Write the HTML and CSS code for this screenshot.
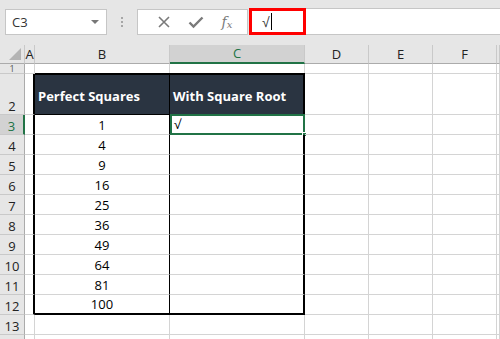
FILE: index.html
```html
<!DOCTYPE html>
<html>
<head>
<meta charset="utf-8">
<link rel="stylesheet" href="styles.css">
</head>
<body>
<div class="toolbar">
  <div class="namebox"><span>C3</span><span class="caret"></span></div>
  <div class="grip"><i></i><i></i><i></i></div>
  <div class="fbtns">
    <svg width="14" height="14" viewBox="0 0 14 14"><path d="M2 2 L12 12 M12 2 L2 12" stroke="#7a7a7a" stroke-width="1.6" fill="none"/></svg>
    <svg width="16" height="14" viewBox="0 0 16 14"><path d="M1.5 7.5 L5.5 11.5 L14.5 2.5" stroke="#7a7a7a" stroke-width="2.4" fill="none"/></svg>
    <span class="fx">f<sub>x</sub></span>
  </div>
  <div class="finput"><div class="fcell"><span class="sq">√</span><span class="cursor"></span></div></div>
</div>
<div class="sheet">
  <div class="corner"><span class="tri"></span></div>
  <div class="ch">A</div><div class="ch">B</div><div class="ch sel">C</div><div class="ch">D</div><div class="ch">E</div><div class="ch">F</div><div class="ch"></div>

  <div class="rh r1">1</div><div class="c"></div><div class="c"></div><div class="c"></div><div class="c"></div><div class="c"></div><div class="c"></div><div class="c"></div>

  <div class="rh">2</div><div class="c lb"></div><div class="c hd hb">Perfect Squares</div><div class="c hd hc">With Square Root</div><div class="c"></div><div class="c"></div><div class="c"></div><div class="c"></div>

  <div class="rh sel">3</div><div class="c lb"></div><div class="c b">1</div><div class="c cc selc">√<span class="handle"></span></div><div class="c"></div><div class="c"></div><div class="c"></div><div class="c"></div>
  <div class="rh">4</div><div class="c lb"></div><div class="c b">4</div><div class="c cc"></div><div class="c"></div><div class="c"></div><div class="c"></div><div class="c"></div>
  <div class="rh">5</div><div class="c lb"></div><div class="c b">9</div><div class="c cc"></div><div class="c"></div><div class="c"></div><div class="c"></div><div class="c"></div>
  <div class="rh">6</div><div class="c lb"></div><div class="c b">16</div><div class="c cc"></div><div class="c"></div><div class="c"></div><div class="c"></div><div class="c"></div>
  <div class="rh">7</div><div class="c lb"></div><div class="c b">25</div><div class="c cc"></div><div class="c"></div><div class="c"></div><div class="c"></div><div class="c"></div>
  <div class="rh">8</div><div class="c lb"></div><div class="c b">36</div><div class="c cc"></div><div class="c"></div><div class="c"></div><div class="c"></div><div class="c"></div>
  <div class="rh">9</div><div class="c lb"></div><div class="c b">49</div><div class="c cc"></div><div class="c"></div><div class="c"></div><div class="c"></div><div class="c"></div>
  <div class="rh">10</div><div class="c lb"></div><div class="c b">64</div><div class="c cc"></div><div class="c"></div><div class="c"></div><div class="c"></div><div class="c"></div>
  <div class="rh">11</div><div class="c lb"></div><div class="c b">81</div><div class="c cc"></div><div class="c"></div><div class="c"></div><div class="c"></div><div class="c"></div>
  <div class="rh">12</div><div class="c lb"></div><div class="c b last">100</div><div class="c cc last"></div><div class="c"></div><div class="c"></div><div class="c"></div><div class="c"></div>

  <div class="rh">13</div><div class="c"></div><div class="c"></div><div class="c"></div><div class="c"></div><div class="c"></div><div class="c"></div><div class="c"></div>
  <div class="rh"></div><div class="c"></div><div class="c"></div><div class="c"></div><div class="c"></div><div class="c"></div><div class="c"></div><div class="c"></div>
</div>
</body>
</html>
```
FILE: styles.css
```css
* { box-sizing: border-box; }
html, body { margin: 0; padding: 0; }
body {
  width: 500px;
  height: 339px;
  overflow: hidden;
  background: #fff;
  font-family: "Open Sans", "Noto Sans", sans-serif;
}
.toolbar {
  height: 45px;
  background: #e6e6e6;
  display: flex;
  align-items: flex-start;
  padding: 9px 0 0 5px;
}
.namebox {
  width: 102px;
  height: 26px;
  background: #fff;
  border: 1px solid #c6c6c6;
  display: flex;
  align-items: center;
  justify-content: space-between;
  padding: 0 6px 0 6px;
  font-size: 13px;
  color: #333;
}
.caret {
  width: 0; height: 0;
  border-left: 4px solid transparent;
  border-right: 4px solid transparent;
  border-top: 4px solid #777;
  margin-right: 1px;
}
.grip {
  width: 30px;
  height: 26px;
  display: flex;
  flex-direction: column;
  align-items: center;
  justify-content: center;
  gap: 2px;
}
.grip i {
  width: 2px; height: 2px; background: #a6a6a6; display: block;
}
.fbtns {
  width: 111px;
  height: 26px;
  background: #fff;
  border: 1px solid #c6c6c6;
  display: flex;
  align-items: center;
  justify-content: space-around;
  padding: 0 6px 0 10px;
}
.fx {
  font-family: "DejaVu Serif", "Liberation Serif", serif;
  font-style: italic;
  font-size: 14px;
  color: #7a7a7a;
  line-height: 1;
}
.fx sub { font-size: 10px; vertical-align: -1px; }
.finput {
  flex: 1;
  margin-left: 2px;
  background: #fff;
  border-top: 1px solid #c6c6c6;
  border-bottom: 1px solid #c6c6c6;
  margin-top: -1px;
  height: 27px;
}
.fcell {
  width: 57px;
  height: 27px;
  border: 3px solid #ff0000;
  margin-top: -1px;
  margin-left: -1px;
  display: flex;
  align-items: center;
  padding-left: 10px;
  font-family: "Liberation Sans", sans-serif;
  font-size: 14px;
  color: #333;
}
.cursor {
  width: 1px; height: 17px; background: #000; margin-left: 1px;
}
.sheet {
  display: grid;
  grid-template-columns: 25px 10px 135px 135px 64px 64px 64px 1fr;
  grid-template-rows: 19px 10px 41px repeat(12, 20px);
}
.corner, .ch, .rh {
  background: #e6e6e6;
  color: #222;
  font-size: 13px;
}
.corner {
  border-right: 1px solid #c9c9c9;
  border-bottom: 1px solid #ababab;
  position: relative;
}
.tri {
  position: absolute;
  right: 3px; bottom: 3px;
  width: 0; height: 0;
  border-left: 12px solid transparent;
  border-bottom: 12px solid #b4b4b4;
}
.ch {
  border-right: 1px solid #c9c9c9;
  border-bottom: 1px solid #ababab;
  display: flex;
  align-items: center;
  justify-content: center;
  line-height: 1;
}
.ch.sel {
  background: #d2d2d2;
  color: #217346;
  border-bottom: 2px solid #217346;
}
.rh {
  border-right: 1px solid #ababab;
  border-bottom: 1px solid #c9c9c9;
  display: flex;
  align-items: flex-end;
  justify-content: center;
  padding-bottom: 1px;
  line-height: 1;
}
.rh.r1 { align-items: center; padding: 0; font-size: 9px; line-height: 9px; color: #555; }
.rh.sel {
  background: #d2d2d2;
  color: #217346;
  border-right: 2px solid #217346;
}
.c {
  border-right: 1px solid #d4d4d4;
  border-bottom: 1px solid #d4d4d4;
  font-family: "Open Sans", "Liberation Sans", sans-serif;
  font-size: 13px;
  color: #000;
  display: flex;
  align-items: flex-end;
  line-height: 1;
  padding-bottom: 2px;
  position: relative;
}
.c.lb { border-right: 2px solid #000; }
.hd {
  background: #2a3441;
  color: #fff;
  font-weight: 700;
  border-top: 2px solid #000;
  border-bottom: 1px solid #000;
  margin-top: -1px;
  padding-left: 3px;
  padding-bottom: 11px;
}
.hb { border-right: 1px solid #000; }
.hc { border-right: 2px solid #000; }
.b {
  justify-content: center;
  border-right: 1px solid #000;
}
.cc { border-right: 2px solid #000; }
.last { border-bottom: 2px solid #000; }
.selc {
  border: 2px solid #217346;
  margin-top: -1px;
  padding-left: 2px;
}
.handle {
  position: absolute;
  right: -4px; bottom: -4px;
  width: 5px; height: 5px;
  background: #217346;
  border: 1px solid #fff;
}
```
